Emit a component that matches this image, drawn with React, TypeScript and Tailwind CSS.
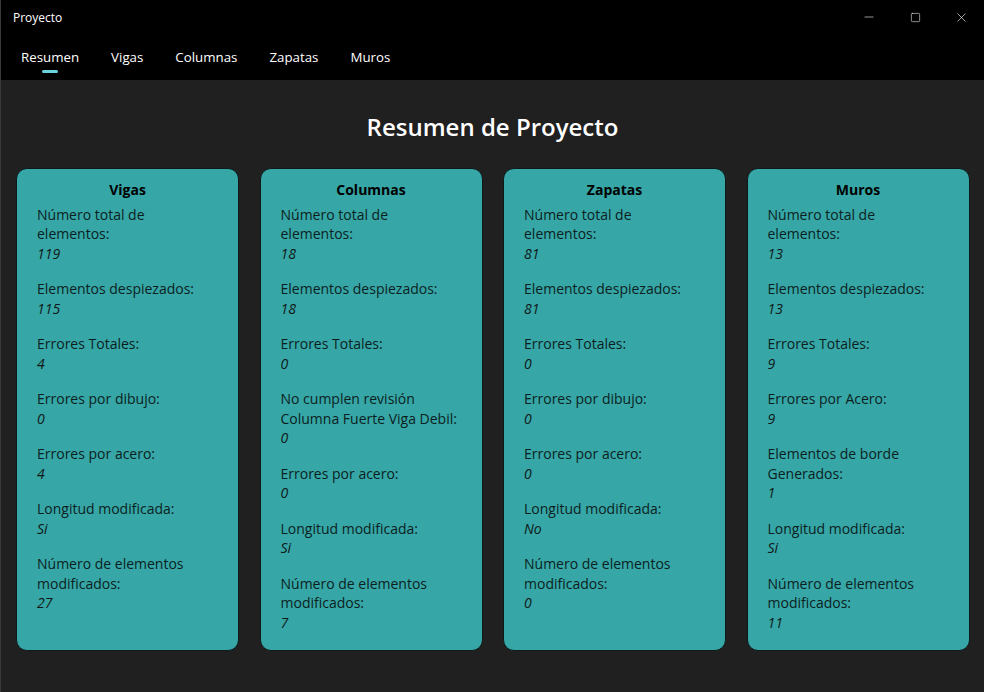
import { Minus, Square, X } from "lucide-react";

type Item = { label: string; value: string };
type Card = { title: string; items: Item[] };

const CARDS: Card[] = [
  {
    title: "Vigas",
    items: [
      { label: "Número total de elementos:", value: "119" },
      { label: "Elementos despiezados:", value: "115" },
      { label: "Errores Totales:", value: "4" },
      { label: "Errores por dibujo:", value: "0" },
      { label: "Errores por acero:", value: "4" },
      { label: "Longitud modificada:", value: "Si" },
      { label: "Número de elementos modificados:", value: "27" },
    ],
  },
  {
    title: "Columnas",
    items: [
      { label: "Número total de elementos:", value: "18" },
      { label: "Elementos despiezados:", value: "18" },
      { label: "Errores Totales:", value: "0" },
      { label: "No cumplen revisión Columna Fuerte Viga Debil:", value: "0" },
      { label: "Errores por acero:", value: "0" },
      { label: "Longitud modificada:", value: "Si" },
      { label: "Número de elementos modificados:", value: "7" },
    ],
  },
  {
    title: "Zapatas",
    items: [
      { label: "Número total de elementos:", value: "81" },
      { label: "Elementos despiezados:", value: "81" },
      { label: "Errores Totales:", value: "0" },
      { label: "Errores por dibujo:", value: "0" },
      { label: "Errores por acero:", value: "0" },
      { label: "Longitud modificada:", value: "No" },
      { label: "Número de elementos modificados:", value: "0" },
    ],
  },
  {
    title: "Muros",
    items: [
      { label: "Número total de elementos:", value: "13" },
      { label: "Elementos despiezados:", value: "13" },
      { label: "Errores Totales:", value: "9" },
      { label: "Errores por Acero:", value: "9" },
      { label: "Elementos de borde Generados:", value: "1" },
      { label: "Longitud modificada:", value: "Si" },
      { label: "Número de elementos modificados:", value: "11" },
    ],
  },
];

const TABS = ["Resumen", "Vigas", "Columnas", "Zapatas", "Muros"];

export default function App() {
  return (
    <div
      className="flex h-[692px] w-[984px] flex-col overflow-hidden border-l border-[#3a3a3a] bg-[#202020]"
      style={{ fontFamily: "'Open Sans', 'Noto Sans', sans-serif" }}
    >
      {/* title bar */}
      <div className="flex h-[34px] items-center justify-between bg-black text-white">
        <span className="pl-3 pt-[1px] text-[12px]">Proyecto</span>
        <div className="flex h-full items-center">
          <div className="flex h-full w-[46px] items-center justify-center">
            <Minus size={14} strokeWidth={1} />
          </div>
          <div className="flex h-full w-[46px] items-center justify-center">
            <Square size={11} strokeWidth={1.2} />
          </div>
          <div className="flex h-full w-[46px] items-center justify-center">
            <X size={15} strokeWidth={1} />
          </div>
        </div>
      </div>

      {/* tabs */}
      <div className="flex h-[46px] items-start gap-[32px] bg-black px-[20px] pt-[13px]">
        {TABS.map((t, i) => (
          <div key={t} className="flex flex-col items-center">
            <span className="text-[13.3px] leading-[20px] text-white">{t}</span>
            {i === 0 && <div className="mt-[3px] h-[3px] w-[16px] rounded-full bg-[#6cd3de]" />}
          </div>
        ))}
      </div>

      {/* content */}
      <div className="flex flex-1 flex-col">
        <h1 className="mt-[31px] text-center text-[24px] font-semibold leading-[32px] text-white">
          Resumen de Proyecto
        </h1>
        <div className="mt-[25px] grid grid-cols-[repeat(4,223px)] gap-[20.5px] pl-[15px]">
          {CARDS.map((c) => (
            <div
              key={c.title}
              className="h-[483px] rounded-[11px] border border-[#0e1a1a] bg-[#36a6a6] px-[20px] pt-[11px] text-[14px] leading-[19.5px] text-[#0c1e1e]"
            >
              <div className="mb-[5px] text-center font-bold text-black">{c.title}</div>
              <div className="flex flex-col gap-[16px]">
                {c.items.map((it) => (
                  <div key={it.label}>
                    <div>{it.label}</div>
                    <div className="italic text-[#101818]">{it.value}</div>
                  </div>
                ))}
              </div>
            </div>
          ))}
        </div>
      </div>
    </div>
  );
}
